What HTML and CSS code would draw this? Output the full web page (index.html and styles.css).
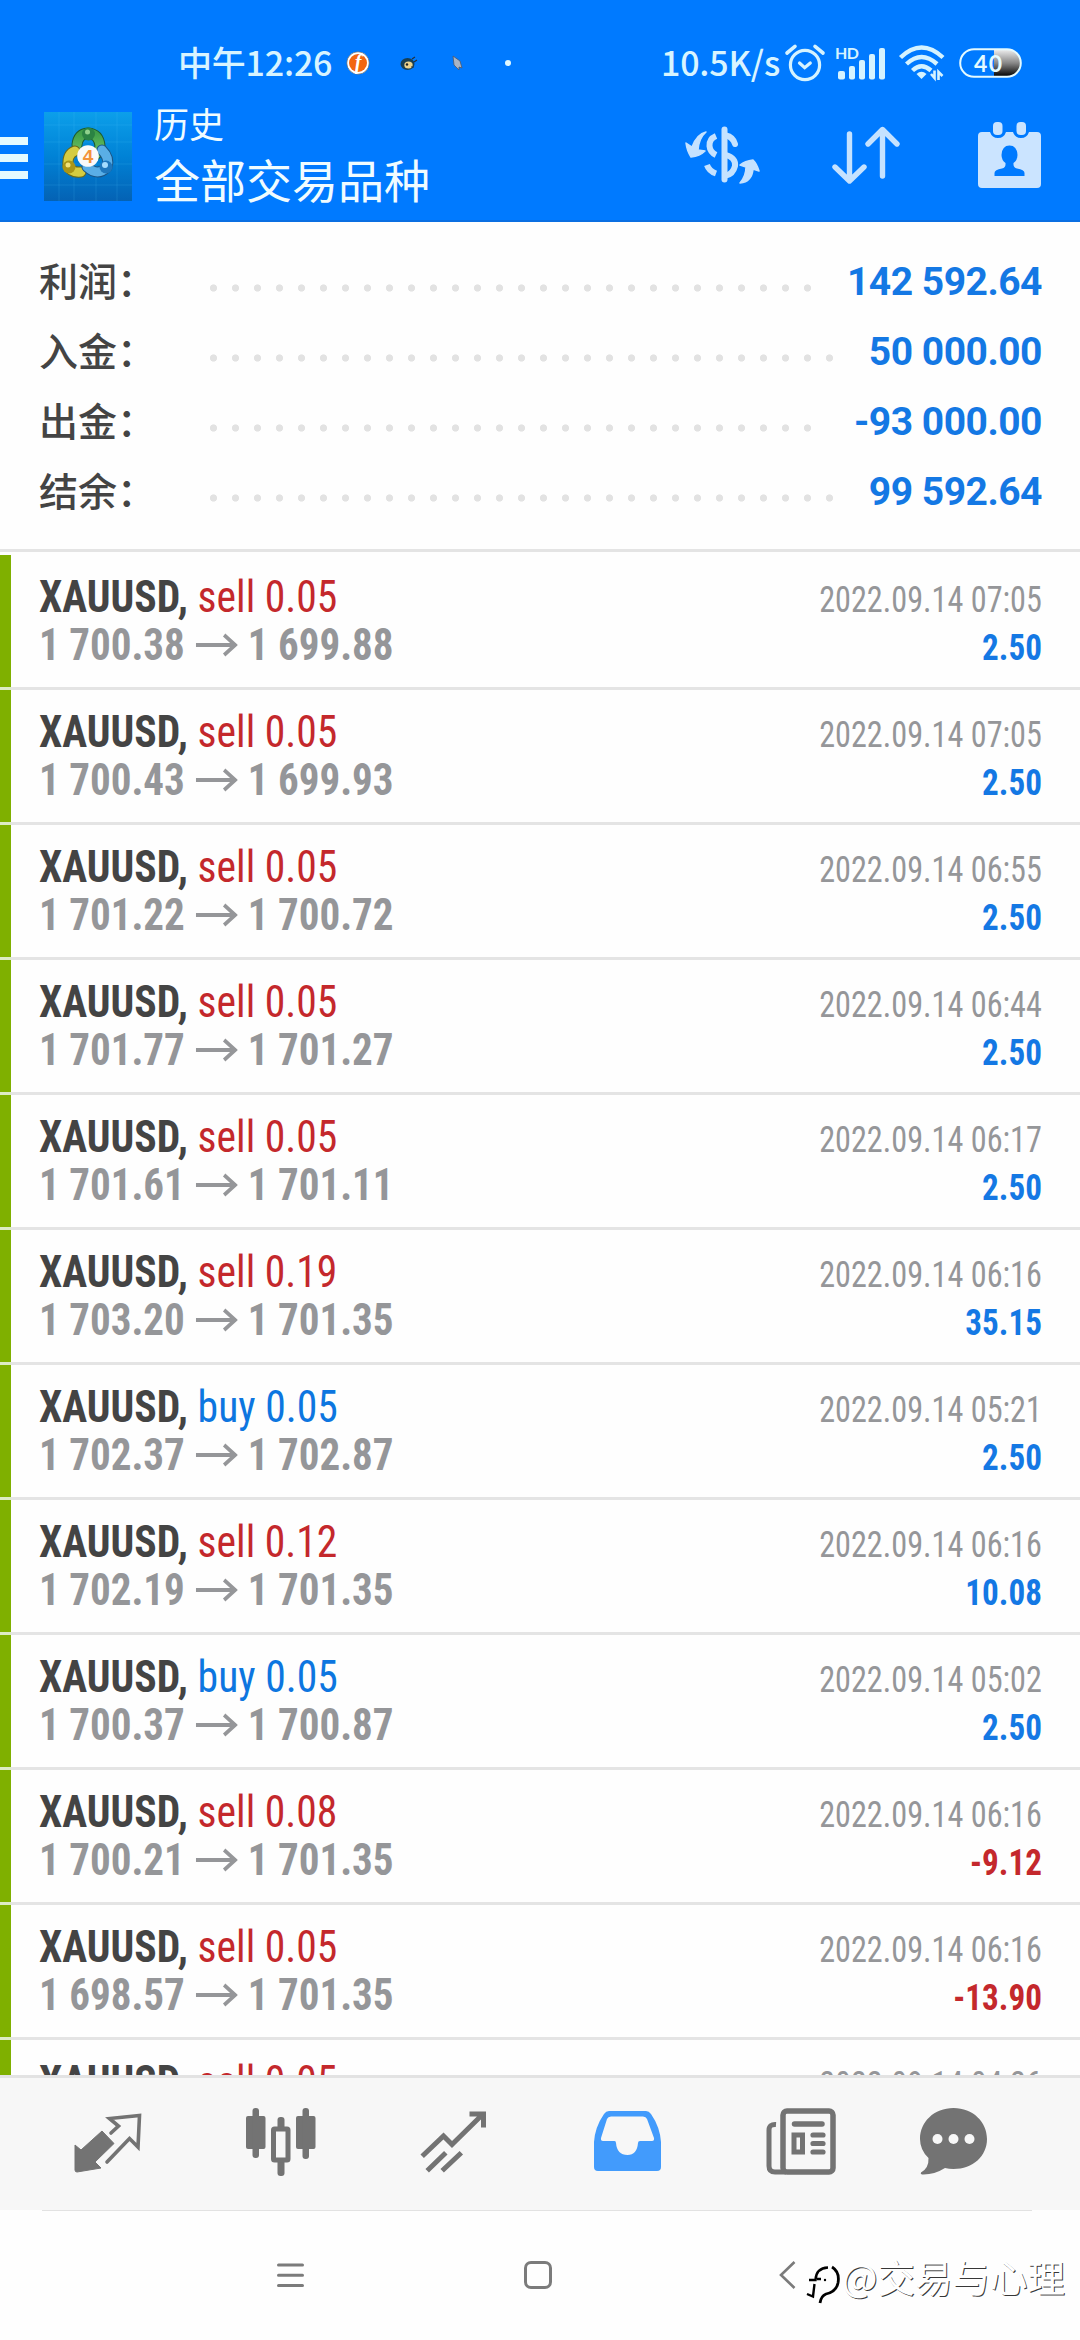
FILE: index.html
```html
<!DOCTYPE html>
<html lang="zh-CN">
<head>
<meta charset="utf-8">
<title>历史</title>
<link rel="stylesheet" href="styles.css">
</head>
<body>
<div class="screen">
<header class="header">
  <div class="status">
    <span class="time">中午12:26</span>
    <svg class="st-f" viewBox="0 0 24 24"><circle cx="12" cy="12" r="11.2" fill="#fff" stroke="#555" stroke-width=".6"/><circle cx="12" cy="12" r="9" fill="#f26611"/><text x="12" y="18" text-anchor="middle" font-family="Liberation Serif, serif" font-style="italic" font-weight="700" font-size="20" fill="#fff">f</text></svg>
    <svg class="st-bee" viewBox="0 0 18 16"><ellipse cx="7.5" cy="9" rx="7" ry="6" fill="#173f55"/><ellipse cx="8.5" cy="10" rx="4.2" ry="3.5" fill="#ead28c"/><circle cx="7" cy="9.5" r="1.2" fill="#222"/><path d="M12 4l3-2M14 7l3-2M11 12h3" stroke="#23313d" stroke-width="1.2"/></svg>
    <svg class="st-cur" viewBox="0 0 11 15"><path d="M1 0L8 5L10 12L7 11V14L2 9Z" fill="#a9b4c4" stroke="#4b586d" stroke-width=".8"/></svg>
    <i class="st-dot"></i>
    <span class="speed">10.5K/s</span>
    <svg class="st-alarm" viewBox="0 0 40 38" fill="none" stroke="#d5f3ff" stroke-width="3.2" stroke-linecap="round"><circle cx="20" cy="21" r="14.6"/><path d="M14.5 19l5.2 4.7 5.6-4.7"/><path d="M2 9l8-6.6M38 9l-8-6.6" stroke-width="3.6"/></svg>
    <svg class="st-signal" viewBox="0 0 51 34" fill="#d5f3ff"><text x="0" y="12.500" font-family="Lato, sans-serif" font-weight="700" font-size="16" textLength="24">HD</text><rect x="3" y="25" width="7" height="8.500" rx="2"/><rect x="14" y="20" width="6" height="13.500" rx="2"/><rect x="24" y="14" width="6" height="19.500" rx="2"/><rect x="34" y="8" width="6" height="25.500" rx="2"/><rect x="44" y="2" width="6" height="31.500" rx="2"/></svg>
    <svg class="st-wifi" viewBox="0 0 46 36"><g fill="none" stroke="#d5f3ff" stroke-width="4.400"><path d="M1.500 12.500Q22.500-7.500 44 12.500"/><path d="M7.500 19Q22.500 5 38 19"/><path d="M13.500 25.500Q22.500 17 32 25.500"/></g><path d="M17.500 29Q22.500 24.500 27.500 29L22.500 34Z" fill="#d5f3ff"/><path d="M32 29l3.500 4V25.500M39.500 35V27l4 4" fill="none" stroke="#d5f3ff" stroke-width="2.600"/></svg>
    <svg class="st-batt" viewBox="0 0 63 30"><defs><linearGradient id="bg" x1="0" y1="0" x2="0" y2="1"><stop offset="0" stop-color="#eee"/><stop offset=".5" stop-color="#888"/><stop offset="1" stop-color="#000"/></linearGradient></defs><path d="M35 1.500H48A13.500 13.500 0 0 1 48 28.500H35Z" fill="url(#bg)"/><rect x="1.200" y="1.200" width="60.600" height="27.600" rx="13.800" fill="none" stroke="#e4faff" stroke-width="2"/><text x="15" y="23.500" font-family="Lato, sans-serif" font-weight="700" font-size="23" textLength="28" fill="#e4faff">40</text></svg>
  </div>
  <div class="appbar">
    <div class="burger"><i></i><i></i><i></i></div>
    <svg class="logo" viewBox="0 0 88 89"><defs>
      <linearGradient id="sky" x1="0" y1="0" x2="0" y2="1"><stop offset="0" stop-color="#0c9fea"/><stop offset=".5" stop-color="#0082d6"/><stop offset="1" stop-color="#0462b4"/></linearGradient>
      <linearGradient id="gr" x1="0" y1="0" x2="0" y2="1"><stop offset="0" stop-color="#3f9f49"/><stop offset="1" stop-color="#72c565"/></linearGradient></defs>
      <rect width="88" height="89" fill="url(#sky)"/>
      <path d="M30 0V89M73 0V89M15 0V89M52 0V89M0 13H88M0 30H88M0 73H88M0 52H88" stroke="#5fd0ff" stroke-opacity=".16" stroke-width="1"/>
      <g fill="none" stroke-linecap="round">
      <path d="M33 33Q34 22 44 21Q55 22 56 34Q55 42 49 44" stroke="#1d5b30" stroke-width="11"/><path d="M33 33Q34 22 44 21Q55 22 56 34Q55 42 49 44" stroke="url(#gr)" stroke-width="9"/>
      <path d="M31 39Q23 42 24 54Q27 61 37 60" stroke="#6b6a18" stroke-width="11"/><path d="M31 39Q23 42 24 54Q27 61 37 60" stroke="#d5cc41" stroke-width="9"/>
      <path d="M58 38Q66 46 63 55Q54 65 43 55" stroke="#1b5585" stroke-width="11"/><path d="M58 38Q66 46 63 55Q54 65 43 55" stroke="#5aaee6" stroke-width="9"/></g>
      <circle cx="44.500" cy="22" r="6.500" fill="#2b8343"/><circle cx="43.500" cy="20" r="2.500" fill="#8fd18c"/>
      <circle cx="25" cy="55" r="6.500" fill="#a99517"/><circle cx="24" cy="53" r="2.500" fill="#f1e37a"/>
      <circle cx="62" cy="55" r="6.500" fill="#1f77bd"/><circle cx="61" cy="53" r="3" fill="#a5dcff"/>
      <circle cx="44" cy="44" r="10.800" fill="#fafafa"/><text x="44" y="51" text-anchor="middle" font-family="Liberation Sans, sans-serif" font-weight="700" font-size="19" fill="#f3933b">4</text></svg>
    <div class="titles"><span class="sub">历史</span><span class="title">全部交易品种</span></div>
    <svg class="ic-dollar" viewBox="0 0 73 57"><g fill="none" stroke="#c5e2ff" stroke-width="6"><path d="M38.500 3.500V53.500" stroke-linecap="round"/><path d="M30 10Q23 13 23.500 20Q24 26 30 29"/><path d="M40 9.500Q47 11 49 18" stroke-linecap="round"/><path d="M21 39Q23 45 30 47.500"/><path d="M40 29Q50 32 49 40Q47 48 40 49.500"/></g><path d="M20 6Q11 8 6 21L0 17Q1 25 5 31Q14 30 19 25L12 24Q13 12 20 6ZM54 57Q66 56 67 43L73 45Q71 38 67 34Q59 35 54 39L60 41Q60 50 54 57Z" fill="#c5e2ff" stroke="#c5e2ff" stroke-width="1.500" stroke-linejoin="round"/></svg>
    <svg class="ic-sort" viewBox="0 0 68 58" fill="none" stroke="#c5e2ff" stroke-width="5.400" stroke-linecap="round" stroke-linejoin="round"><path d="M17.500 8V54M3 41L17.500 55L32 41M50.500 50V4M36 18L50.500 3.500L65 18"/></svg>
    <svg class="ic-cal" viewBox="0 0 63 66"><path d="M4 10H12Q14 16 20 16Q26 16 28 10H35Q37 16 43 16Q49 16 51 10H59Q63 10 63 14V62Q63 66 59 66H4Q0 66 0 62V14Q0 10 4 10Z" fill="#cbe4ff"/><rect x="15" y="0" width="9.500" height="13" rx="4" fill="#cbe4ff"/><rect x="38.500" y="0" width="9.500" height="13" rx="4" fill="#cbe4ff"/><path d="M31.500 23.500Q39 23.500 39.500 33Q39.500 38 35.500 41Q35 46 39 46.500Q46.500 47.500 46.500 51V54H16.500V51Q16.500 47.500 24 46.500Q28 46 27.500 41Q23.500 38 23.500 33Q24 23.500 31.500 23.500Z" fill="#007aff"/></svg>
  </div>
</header>

<section class="summary">
  <div class="sum"><span class="lab">利润：</span><i class="dots"></i><b>142 592.64</b></div>
  <div class="sum"><span class="lab">入金：</span><i class="dots"></i><b>50 000.00</b></div>
  <div class="sum"><span class="lab">出金：</span><i class="dots"></i><b>-93 000.00</b></div>
  <div class="sum"><span class="lab">结余：</span><i class="dots"></i><b>99 592.64</b></div>
</section>

<svg class="defs"><symbol id="arrow" viewBox="0 0 46 24"><path d="M0 12H43M31 2L43 12L31 22" fill="none" stroke="#959699" stroke-width="4"/></symbol></svg>
<main class="list">
  <div class="deal"><div class="left"><p class="sym">XAUUSD, <span class="sell">sell 0.05</span></p><p class="price">1 700.38<svg><use href="#arrow"/></svg>1 699.88</p></div><div class="right"><p class="date">2022.09.14 07:05</p><p class="profit">2.50</p></div></div>
  <div class="deal"><div class="left"><p class="sym">XAUUSD, <span class="sell">sell 0.05</span></p><p class="price">1 700.43<svg><use href="#arrow"/></svg>1 699.93</p></div><div class="right"><p class="date">2022.09.14 07:05</p><p class="profit">2.50</p></div></div>
  <div class="deal"><div class="left"><p class="sym">XAUUSD, <span class="sell">sell 0.05</span></p><p class="price">1 701.22<svg><use href="#arrow"/></svg>1 700.72</p></div><div class="right"><p class="date">2022.09.14 06:55</p><p class="profit">2.50</p></div></div>
  <div class="deal"><div class="left"><p class="sym">XAUUSD, <span class="sell">sell 0.05</span></p><p class="price">1 701.77<svg><use href="#arrow"/></svg>1 701.27</p></div><div class="right"><p class="date">2022.09.14 06:44</p><p class="profit">2.50</p></div></div>
  <div class="deal"><div class="left"><p class="sym">XAUUSD, <span class="sell">sell 0.05</span></p><p class="price">1 701.61<svg><use href="#arrow"/></svg>1 701.11</p></div><div class="right"><p class="date">2022.09.14 06:17</p><p class="profit">2.50</p></div></div>
  <div class="deal"><div class="left"><p class="sym">XAUUSD, <span class="sell">sell 0.19</span></p><p class="price">1 703.20<svg><use href="#arrow"/></svg>1 701.35</p></div><div class="right"><p class="date">2022.09.14 06:16</p><p class="profit">35.15</p></div></div>
  <div class="deal"><div class="left"><p class="sym">XAUUSD, <span class="buy">buy 0.05</span></p><p class="price">1 702.37<svg><use href="#arrow"/></svg>1 702.87</p></div><div class="right"><p class="date">2022.09.14 05:21</p><p class="profit">2.50</p></div></div>
  <div class="deal"><div class="left"><p class="sym">XAUUSD, <span class="sell">sell 0.12</span></p><p class="price">1 702.19<svg><use href="#arrow"/></svg>1 701.35</p></div><div class="right"><p class="date">2022.09.14 06:16</p><p class="profit">10.08</p></div></div>
  <div class="deal"><div class="left"><p class="sym">XAUUSD, <span class="buy">buy 0.05</span></p><p class="price">1 700.37<svg><use href="#arrow"/></svg>1 700.87</p></div><div class="right"><p class="date">2022.09.14 05:02</p><p class="profit">2.50</p></div></div>
  <div class="deal"><div class="left"><p class="sym">XAUUSD, <span class="sell">sell 0.08</span></p><p class="price">1 700.21<svg><use href="#arrow"/></svg>1 701.35</p></div><div class="right"><p class="date">2022.09.14 06:16</p><p class="profit loss">-9.12</p></div></div>
  <div class="deal"><div class="left"><p class="sym">XAUUSD, <span class="sell">sell 0.05</span></p><p class="price">1 698.57<svg><use href="#arrow"/></svg>1 701.35</p></div><div class="right"><p class="date">2022.09.14 06:16</p><p class="profit loss">-13.90</p></div></div>
  <div class="deal"><div class="left"><p class="sym">XAUUSD, <span class="sell">sell 0.05</span></p></div><div class="right"><p class="date">2022.09.14 04:26</p></div></div>
</main>

<nav class="tabs">
  <svg class="t1" viewBox="0 0 67 60"><path d="M27 19L39 31.500L20 50L26 56L2 60Q0 60 0 58V33L6 38Z" fill="#737373" stroke="#737373" stroke-linejoin="round"/><path d="M36 21L43.500 14L34.500 6.500L64.500 3.500L63 35L54.500 26.500L32 50" fill="none" stroke="#737373" stroke-width="3.600" stroke-linecap="round"/></svg>
  <svg class="t2" viewBox="0 0 70 69"><g fill="#737373"><rect x="0" y="8" width="19.500" height="33" rx="2"/><rect x="6.500" y="0" width="6.500" height="50" rx="3"/><rect x="50" y="8" width="19.500" height="33" rx="2"/><rect x="56.500" y="0" width="6.500" height="51" rx="3"/><rect x="31.500" y="9" width="7" height="13" rx="3"/><rect x="31.500" y="50" width="7" height="18" rx="3"/></g><rect x="27.500" y="21" width="14.500" height="31" rx="1" fill="none" stroke="#737373" stroke-width="5"/></svg>
  <svg class="t3" viewBox="0 0 66 62" fill="none" stroke="#737373" stroke-width="5" stroke-linecap="square"><path d="M3 44.500L22.500 26L31 34.500L61 5M51 4H62.500V15M8 59L23 44.500M23 59L38.500 44.500"/></svg>
  <svg class="t4" viewBox="0 0 67 62"><path fill="#429bfc" fill-rule="evenodd" d="M15 1H52Q55 1 57 4Q66 17 67 32V57Q67 61 63 61H4Q0 61 0 57V32Q1 17 10 4Q12 1 15 1ZM17 6.500Q14 6.500 13 9L7 28Q6.500 31 9 31H20.500Q22 31 22 33Q23 45 33.500 45Q43 45 44 33Q44 31 46 31H58Q60.500 31 60 28L53 9Q52 6.500 49 6.500Z"/></svg>
  <svg class="t5" viewBox="0 0 70 67" fill="none" stroke="#737373"><rect x="17" y="3" width="50" height="61" rx="4" stroke-width="5.500"/><path d="M10 16.500Q3 16 3 22V58Q3 64 9 64H20" stroke-width="5"/><path d="M28.500 16H56" stroke-width="5.500" stroke-linecap="round"/><rect x="28" y="27" width="8.500" height="17" stroke-width="5"/><path d="M47 27H57M47 35.500H57M47 44H57" stroke-width="5.200" stroke-linecap="round"/></svg>
  <svg class="t6" viewBox="0 0 67 67"><path d="M33.500 0C53 0 67 14 67 31C67 48 53 61 33.500 61Q29 61 25 60Q14 67 2 66.500Q0 66 1 64.500Q9 60 8.500 50Q0 42 0 31C0 14 14 0 33.500 0Z" fill="#737373"/><g fill="#f7f7f7"><circle cx="17.500" cy="31" r="5"/><circle cx="33.500" cy="31" r="5"/><circle cx="49.500" cy="31" r="5"/></g></svg>
</nav>
<footer class="sysbar">
  <svg class="n1" viewBox="0 0 27 25" stroke="#7b7b7b" stroke-width="3" stroke-linecap="round"><path d="M1.500 2H25.500M1.500 12.300H25.500M1.500 22.500H25.500"/></svg>
  <i class="n2"></i>
  <svg class="n3" viewBox="0 0 17 28" fill="none" stroke="#7b7b7b" stroke-width="2.600"><path d="M15.500 1L2 14L15.500 27"/></svg>
</footer>
<div class="watermark">
  <svg viewBox="6 11 36 44" fill="none" stroke="#000"><path d="M9 30H15.500Q16 18 28 17.500M17 29H21M14.500 34L13 46.500L7 44" stroke-width="2.400"/><path d="M32 17Q40 22 38 33Q36 42 26 44Q21 46 20 53" stroke-width="2.800"/><circle cx="25" cy="30" r="1.200" fill="#000" stroke="none"/></svg>
  <span>@交易与心理</span>
</div>
</div>
</body>
</html>
```
FILE: styles.css
```css
*{box-sizing:border-box}
body{margin:0;background:#fefefe;font-family:Roboto,"Noto Sans CJK SC",sans-serif}
p{margin:0}
svg{display:block;flex:none;overflow:visible}
.defs{display:none}
.screen{width:1080px;height:2340px;display:flex;flex-direction:column;overflow:hidden;position:relative}

.header{height:222px;background:#007aff;border-bottom:2px solid #0a6fe2;flex:none}
.status{height:103px;padding:23px 0 0 178px;display:flex;align-items:center;color:#d8f4ff;font-family:"Noto Sans CJK SC",sans-serif;font-weight:500;font-size:34px;line-height:40px;white-space:nowrap}
.time{width:168px;letter-spacing:-.2px;padding-bottom:2px}
.st-f{width:24px;height:24px}
.st-bee{width:18px;height:16px;margin-left:30px}
.st-cur{width:11px;height:15px;margin-left:34px}
.st-dot{width:6px;height:6px;border-radius:50%;background:#dff8ff;margin-left:42px}
.speed{width:123px;margin-left:150px;letter-spacing:-.2px;padding-bottom:2px}
.st-alarm{width:40px;height:38px;margin-left:1px}
.st-signal{width:51px;height:34px;margin-left:10px}
.st-wifi{width:46px;height:36px;margin-left:13px}
.st-batt{width:63px;height:30px;margin-left:14px}

.appbar{height:117px;display:flex;align-items:flex-start}
.burger{width:28px;margin:34px 16px 0 0;display:flex;flex-direction:column;gap:9px}
.burger i{height:8px;background:#e4faff}
.logo{width:88px;height:89px;margin-top:9px}
.titles{display:flex;flex-direction:column;width:532px;margin:-2px 0 0 22px;color:#f0fcff;font-family:"Noto Sans CJK SC",sans-serif;font-weight:400;white-space:nowrap}
.sub{font-size:35px;line-height:44px}
.title{font-size:46px;line-height:66px}
.ic-dollar{width:73px;height:57px;margin-top:23px}
.ic-sort{width:68px;height:58px;margin:23px 0 0 73px}
.ic-cal{width:63px;height:66px;margin:19px 0 0 78px}

.summary{height:330px;padding:24px 38px 0 39px;border-bottom:3px solid #e4e4e4;flex:none}
.sum{height:70px;display:flex;align-items:center;line-height:70px;font-size:39px}
.lab{width:163px;margin-top:-5px;color:#444;font-weight:500;font-family:"Noto Sans CJK SC",sans-serif}
.dots{flex:1;height:22px;margin:14px 28px 0 0;background:radial-gradient(circle at 11.5px 11px,#e2e2e2 3.2px,transparent 4px) 0 0/22px 22px repeat-x}
.sum b{margin-top:2px;color:#1478e4;font-weight:700;letter-spacing:-.5px}

.list{height:1523px;padding-top:3px;overflow:hidden;flex:none}
.deal{height:135px;display:flex;justify-content:space-between;padding:18px 38px 0 39px;background:linear-gradient(#7fb000,#7fb000) 0 0/11px 132px no-repeat,linear-gradient(#dcebc4,#dcebc4) 0 132px/11px 3px no-repeat,linear-gradient(#e4e4e4,#e4e4e4) 11px 132px/1069px 3px no-repeat;font-stretch:75%;line-height:48px;white-space:nowrap}
.left{font-size:45px}
.right{font-size:36px;text-align:right;padding-top:3px}
.sym{font-weight:700;color:#444;transform:scaleX(.925);transform-origin:left}
.sell{font-weight:400;color:#c4282c}
.buy{font-weight:400;color:#0d76e0}
.price{font-weight:700;color:#959699;display:flex;align-items:center;transform:scaleX(.912);transform-origin:left}
.price svg{width:46px;height:24px;margin:0 11px 0 12px}
.date{color:#959699;transform:scaleX(.895);transform-origin:right}
.profit{font-weight:700;color:#1478e4;transform:scaleX(.92);transform-origin:right}
.profit.loss{color:#c4282c}

.tabs{height:135px;background:#f7f7f7;border-top:3px solid #e3e3e3;display:flex;align-items:flex-start;padding-left:75px;flex:none}
.t1{width:67px;height:60px;margin-top:34px}
.t2{width:70px;height:69px;margin:30px 0 0 104px}
.t3{width:66px;height:62px;margin:32px 0 0 105px}
.t4{width:67px;height:62px;margin:32px 0 0 107px}
.t5{width:70px;height:67px;margin:30px 0 0 105px}
.t6{width:67px;height:67px;margin:30px 0 0 84px}

.sysbar{height:130px;display:flex;align-items:flex-start;padding:51px 0 0 277px;background:linear-gradient(#e2e2e2,#e2e2e2) 42px 0/990px 1px no-repeat;flex:none}
.n1{width:27px;height:25px;margin-top:2px}
.n2{width:28px;height:28px;border:3px solid #7b7b7b;border-radius:7px;margin-left:220px}
.n3{width:17px;height:28px;margin-left:227px}
.watermark{position:absolute;left:806px;top:2249px;display:flex;align-items:center;color:#fff;font:400 37.5px/46px "Noto Sans CJK SC",sans-serif;white-space:nowrap;text-shadow:1px 1px 0 rgba(0,0,0,.8)}
.watermark svg{width:36px;height:44px;margin:12px 0 0 0}
.watermark span{margin-top:-2px}
```
